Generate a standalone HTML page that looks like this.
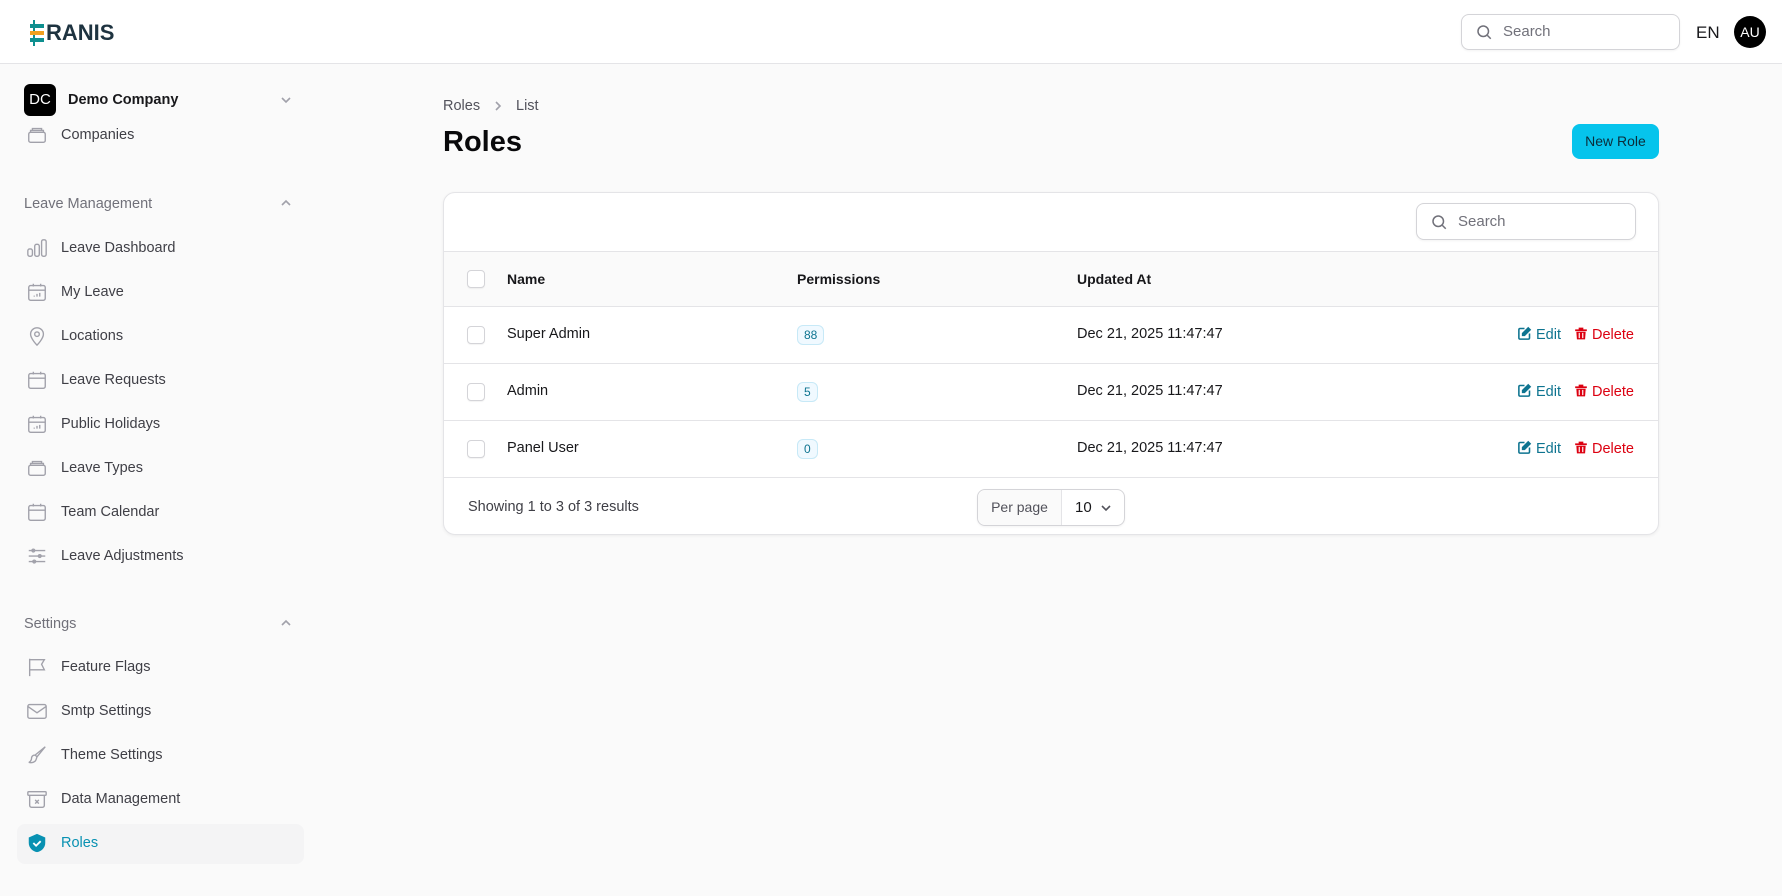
<!DOCTYPE html>
<html><head><meta charset="utf-8"><style>
*{box-sizing:border-box;margin:0;padding:0}
body{width:1782px;height:896px;overflow:hidden;background:#fafafa;font-family:"Liberation Sans",sans-serif;color:#18181b;position:relative}
.hdr{position:absolute;left:0;top:0;width:1782px;height:64px;background:#fff;border-bottom:1px solid #e4e4e7}
.abs{position:absolute}
.srch{border:1px solid #d4d4d8;border-radius:8px;background:#fff;box-shadow:0 1px 2px rgba(0,0,0,.05);font-size:15px;color:#71717a}
.srch svg{position:absolute;left:13px;top:50%;margin-top:-9px}
.srch span{position:absolute;left:41px;top:50%;margin-top:-9px}
.side-item{position:absolute;left:26px;font-size:14.5px;color:#3f3f46;display:flex;align-items:center;height:24px}
.side-item svg{width:22px;height:22px;margin-right:13px;stroke:#a1a1aa;fill:none;stroke-width:1.5}
.grp{position:absolute;left:24px;font-size:14.5px;color:#71717a}
.chev{position:absolute;left:280px;stroke:#a1a1aa;fill:none;stroke-width:1.6}
.card{left:443px;top:192px;width:1216px;height:343px;background:#fff;border:1px solid #e4e4e7;border-radius:12px;box-shadow:0 1px 3px rgba(0,0,0,.06);overflow:hidden}
.row{position:absolute;left:0;width:1216px;border-top:1px solid #e4e4e7;font-size:14.5px}
.cb{position:absolute;left:23px;width:18px;height:18px;border:1px solid #d4d4d8;border-radius:4px;background:#fff;box-shadow:0 1px 1px rgba(0,0,0,.05)}
.badge{position:absolute;left:353px;height:20px;padding:0 6px;border:1px solid #c7e9f7;background:#f0f9ff;color:#0e7490;border-radius:6px;font-size:12px;line-height:18px}
.txt{position:absolute}
</style></head><body>
<div class="hdr">
 <div class="abs" style="left:30px;top:20px;width:14px;height:26px">
  <div class="abs" style="left:3px;top:0;width:2px;height:26px;background:#0e8f8f"></div>
  <div class="abs" style="left:0;top:4px;width:14px;height:4px;background:#0e8f8f"></div>
  <div class="abs" style="left:0;top:11px;width:14px;height:4px;background:#f0a020"></div>
  <div class="abs" style="left:0;top:18px;width:14px;height:4px;background:#0e8f8f"></div>
 </div>
 <div class="abs" style="left:46px;top:20px;font-weight:bold;font-size:22px;color:#1e3340">RANIS</div>
 <div class="abs srch" style="left:1461px;top:14px;width:219px;height:36px">
  <svg width="18" height="18" viewBox="0 0 24 24" fill="none" stroke="#71717a" stroke-width="2"><circle cx="11" cy="11" r="7"/><path d="M16.5 16.5 21 21"/></svg><span>Search</span></div>
 <div class="abs" style="left:1696px;top:23px;font-size:17px;color:#18181b">EN</div>
 <div class="abs" style="left:1734px;top:16px;width:32px;height:32px;border-radius:50%;background:#000;color:#fff;font-size:14px;text-align:center;line-height:32px">AU</div>
</div>

<div class="abs" style="left:24px;top:84px;width:32px;height:32px;background:#000;border-radius:6px;color:#fff;font-size:15px;text-align:center;line-height:32px">DC</div>
<div class="abs" style="left:68px;top:92px;font-size:14.5px;font-weight:bold;color:#18181b">Demo Company</div>
<svg class="chev" style="top:94px" width="12" height="12" viewBox="0 0 12 12"><path d="M2 4l4 4 4-4"/></svg>
<div class="side-item" style="top:123px"><svg viewBox="0 0 24 24"><rect x="3" y="9" width="18" height="11" rx="2"/><path d="M5 9V7h14v2M7 7V5h10v2"/></svg>Companies</div>

<div class="grp" style="top:196px">Leave Management</div>
<svg class="chev" style="top:197px" width="12" height="12" viewBox="0 0 12 12"><path d="M2 8l4-4 4 4"/></svg>
<div class="side-item" style="top:236px"><svg viewBox="0 0 24 24"><rect x="2" y="13" width="5" height="8" rx="2"/><rect x="9.5" y="8" width="5" height="13" rx="2"/><rect x="17" y="3" width="5" height="18" rx="2"/></svg>Leave Dashboard</div>
<div class="side-item" style="top:280px"><svg viewBox="0 0 24 24"><rect x="3" y="5" width="18" height="16" rx="2"/><path d="M3 10h18M8 3v3M16 3v3M9 17v-1M12 17v-3M15 17v-4"/></svg>My Leave</div>
<div class="side-item" style="top:324px"><svg viewBox="0 0 24 24"><path d="M12 22s7-7 7-12a7 7 0 0 0-14 0c0 5 7 12 7 12z"/><circle cx="12" cy="10" r="2.5"/></svg>Locations</div>
<div class="side-item" style="top:368px"><svg viewBox="0 0 24 24"><rect x="3" y="5" width="18" height="16" rx="2"/><path d="M3 10h18M8 3v3M16 3v3"/></svg>Leave Requests</div>
<div class="side-item" style="top:412px"><svg viewBox="0 0 24 24"><rect x="3" y="5" width="18" height="16" rx="2"/><path d="M3 10h18M8 3v3M16 3v3M9 17v-1M12 17v-3M15 17v-4"/></svg>Public Holidays</div>
<div class="side-item" style="top:456px"><svg viewBox="0 0 24 24"><rect x="3" y="9" width="18" height="11" rx="2"/><path d="M5 9V7h14v2M7 7V5h10v2"/></svg>Leave Types</div>
<div class="side-item" style="top:500px"><svg viewBox="0 0 24 24"><rect x="3" y="5" width="18" height="16" rx="2"/><path d="M3 10h18M8 3v3M16 3v3"/></svg>Team Calendar</div>
<div class="side-item" style="top:544px"><svg viewBox="0 0 24 24"><path d="M3 6h18M3 12h18M3 18h18"/><circle cx="8" cy="6" r="1.5"/><circle cx="15" cy="12" r="1.5"/><circle cx="9" cy="18" r="1.5"/></svg>Leave Adjustments</div>

<div class="grp" style="top:616px">Settings</div>
<svg class="chev" style="top:617px" width="12" height="12" viewBox="0 0 12 12"><path d="M2 8l4-4 4 4"/></svg>
<div class="side-item" style="top:655px"><svg viewBox="0 0 24 24"><path d="M4 22V3M4 4h16l-3 5 3 6H4"/></svg>Feature Flags</div>
<div class="side-item" style="top:699px"><svg viewBox="0 0 24 24"><rect x="2" y="5" width="20" height="15" rx="2"/><path d="M2 7l10 7 10-7"/></svg>Smtp Settings</div>
<div class="side-item" style="top:743px"><svg viewBox="0 0 24 24"><path d="M21 3l-9 11-2-2L21 3zM10 12c-3 0-4 2-4 4s-2 4-3 4c3 1 7 0 8-3l1-3"/></svg>Theme Settings</div>
<div class="side-item" style="top:787px"><svg viewBox="0 0 24 24"><rect x="2" y="4" width="20" height="4" rx="1"/><path d="M4 8v11a2 2 0 0 0 2 2h12a2 2 0 0 0 2-2V8M10 13l4 4M14 13l-4 4"/></svg>Data Management</div>
<div class="abs" style="left:17px;top:824px;width:287px;height:40px;background:#f4f4f5;border-radius:8px"></div>
<div class="side-item" style="top:831px;color:#0891b2"><svg viewBox="0 0 24 24" style="stroke:none;fill:#0891b2"><path d="M12 2l9 4v6c0 5-4 9-9 10-5-1-9-5-9-10V6z"/><path d="M8 12l3 3 5-5" stroke="#fff" stroke-width="2" fill="none"/></svg>Roles</div>

<div class="abs" style="left:443px;top:98px;font-size:14.5px;color:#52525b">Roles</div>
<svg class="abs" style="left:492px;top:100px" width="12" height="12" viewBox="0 0 12 12" fill="none" stroke="#a1a1aa" stroke-width="1.6"><path d="M4 2l4 4-4 4"/></svg>
<div class="abs" style="left:516px;top:98px;font-size:14.5px;color:#52525b">List</div>
<div class="abs" style="left:443px;top:126px;font-size:29px;font-weight:bold;color:#09090b">Roles</div>
<div class="abs" style="left:1572px;top:124px;width:87px;height:35px;background:#06c4ec;border-radius:8px;font-size:14px;color:#0c2d3a;text-align:center;line-height:35px">New Role</div>

<div class="abs card">
 <div class="abs srch" style="left:972px;top:10px;width:220px;height:37px"><svg width="18" height="18" viewBox="0 0 24 24" fill="none" stroke="#71717a" stroke-width="2"><circle cx="11" cy="11" r="7"/><path d="M16.5 16.5 21 21"/></svg><span>Search</span></div>
 <div class="row" style="top:58px;height:55px;background:#fafafa;font-weight:bold;font-size:14px">
  <div class="cb" style="top:18px"></div>
  <div class="txt" style="left:63px;top:19px">Name</div>
  <div class="txt" style="left:353px;top:19px">Permissions</div>
  <div class="txt" style="left:633px;top:19px">Updated At</div>
 </div>
 <div class="row" style="top:113px;height:57px">
  <div class="cb" style="top:19px"></div><div class="txt" style="left:63px;top:19px">Super Admin</div>
  <div class="badge" style="top:18px">88</div><div class="txt" style="left:633px;top:19px">Dec 21, 2025 11:47:47</div>
  <div class="txt" style="left:1073px;top:19px;color:#0e7490"><svg width="15" height="15" viewBox="0 0 24 24" style="vertical-align:-2px;margin-right:4px" fill="none" stroke="#0e7490" stroke-width="2.5"><path d="M12 4H5a2 2 0 0 0-2 2v13a2 2 0 0 0 2 2h13a2 2 0 0 0 2-2v-7"/><path d="M18 3l3 3-9 9H9v-3z" fill="#0e7490"/></svg>Edit</div>
  <div class="txt" style="left:1130px;top:19px;color:#dc0010"><svg width="14" height="15" viewBox="0 0 24 24" style="vertical-align:-2px;margin-right:4px" fill="#dc0010"><path d="M8 2h8v3h6v3H2V5h6z"/><path d="M4 9h16l-1 13H5zM8 11v9h2v-9zM14 11v9h2v-9z" fill-rule="evenodd"/></svg>Delete</div>
 </div>
 <div class="row" style="top:170px;height:57px">
  <div class="cb" style="top:19px"></div><div class="txt" style="left:63px;top:19px">Admin</div>
  <div class="badge" style="top:18px">5</div><div class="txt" style="left:633px;top:19px">Dec 21, 2025 11:47:47</div>
  <div class="txt" style="left:1073px;top:19px;color:#0e7490"><svg width="15" height="15" viewBox="0 0 24 24" style="vertical-align:-2px;margin-right:4px" fill="none" stroke="#0e7490" stroke-width="2.5"><path d="M12 4H5a2 2 0 0 0-2 2v13a2 2 0 0 0 2 2h13a2 2 0 0 0 2-2v-7"/><path d="M18 3l3 3-9 9H9v-3z" fill="#0e7490"/></svg>Edit</div>
  <div class="txt" style="left:1130px;top:19px;color:#dc0010"><svg width="14" height="15" viewBox="0 0 24 24" style="vertical-align:-2px;margin-right:4px" fill="#dc0010"><path d="M8 2h8v3h6v3H2V5h6z"/><path d="M4 9h16l-1 13H5zM8 11v9h2v-9zM14 11v9h2v-9z" fill-rule="evenodd"/></svg>Delete</div>
 </div>
 <div class="row" style="top:227px;height:57px">
  <div class="cb" style="top:19px"></div><div class="txt" style="left:63px;top:19px">Panel User</div>
  <div class="badge" style="top:18px">0</div><div class="txt" style="left:633px;top:19px">Dec 21, 2025 11:47:47</div>
  <div class="txt" style="left:1073px;top:19px;color:#0e7490"><svg width="15" height="15" viewBox="0 0 24 24" style="vertical-align:-2px;margin-right:4px" fill="none" stroke="#0e7490" stroke-width="2.5"><path d="M12 4H5a2 2 0 0 0-2 2v13a2 2 0 0 0 2 2h13a2 2 0 0 0 2-2v-7"/><path d="M18 3l3 3-9 9H9v-3z" fill="#0e7490"/></svg>Edit</div>
  <div class="txt" style="left:1130px;top:19px;color:#dc0010"><svg width="14" height="15" viewBox="0 0 24 24" style="vertical-align:-2px;margin-right:4px" fill="#dc0010"><path d="M8 2h8v3h6v3H2V5h6z"/><path d="M4 9h16l-1 13H5zM8 11v9h2v-9zM14 11v9h2v-9z" fill-rule="evenodd"/></svg>Delete</div>
 </div>
 <div class="row" style="top:284px;height:59px">
  <div class="txt" style="left:24px;top:21px;color:#3f3f46">Showing 1 to 3 of 3 results</div>
  <div class="abs" style="left:533px;top:11px;width:148px;height:37px;border:1px solid #d4d4d8;border-radius:8px;box-shadow:0 1px 2px rgba(0,0,0,.05)">
   <div class="abs" style="left:0;top:0;width:84px;height:35px;background:#fafafa;border-right:1px solid #e4e4e7;border-radius:8px 0 0 8px;font-size:14px;color:#52525b;text-align:center;line-height:35px">Per page</div>
   <div class="abs" style="left:97px;top:9px;font-size:15px">10</div>
   <svg class="abs" style="left:122px;top:12px" width="12" height="12" viewBox="0 0 12 12" fill="none" stroke="#52525b" stroke-width="1.6"><path d="M2 4l4 4 4-4"/></svg>
  </div>
 </div>
</div>
</body></html>
